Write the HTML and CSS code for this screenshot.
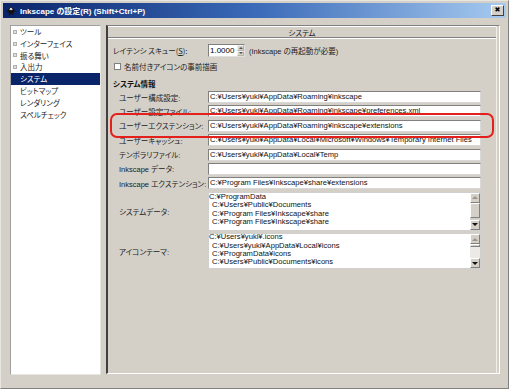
FILE: index.html
```html
<!DOCTYPE html>
<html lang="ja">
<head>
<meta charset="utf-8">
<link rel="stylesheet" href="styles.css">
</head>
<body>
<div class="window">
  <div class="titlebar">
    <svg class="app-icon" width="10" height="10" viewBox="0 0 10 10">
      <path d="M5 0.5 L9.2 5 Q9.5 5.6 8.8 5.8 L7.2 6 L7.6 8.6 Q7.4 9.4 6.6 8.8 L5.2 7.2 L3.6 9.4 Q2.9 9.8 2.8 9 L3 6.4 L1.3 6.2 Q0.5 6 0.9 5.2 Z" fill="#111"/>
      <path d="M5 1.6 L7 3.8 L5.8 3.4 L5 4.4 L4.2 3.4 L3 3.8 Z" fill="#fff"/>
    </svg>
    <span class="title-text">Inkscape の設定(R) (Shift+Ctrl+P)</span>
    <span class="close-btn">&#x2716;</span>
  </div>
  <div class="main">
    <div class="tree">
      <div class="node"><span class="exp"></span>ツール</div>
      <div class="node"><span class="exp"></span>インターフェイス</div>
      <div class="node"><span class="exp"></span>振る舞い</div>
      <div class="node"><span class="exp"></span>入出力</div>
      <div class="node leaf selected">システム</div>
      <div class="node leaf">ビットマップ</div>
      <div class="node leaf">レンダリング</div>
      <div class="node leaf">スペルチェック</div>
    </div>
    <div class="panel">
      <div class="panel-head">システム</div>
      <div class="panel-body">
        <div class="latency">
          <span class="lat-label">レイテンシ スキュー(<u>S</u>):</span>
          <span class="spin">
            <span class="spin-val">1.0000</span>
            <span class="spin-btns"><span class="arr up"></span><span class="arr down"></span></span>
          </span>
          <span class="lat-note">(Inkscape の再起動が必要)</span>
        </div>
        <div class="check-row"><span class="checkbox"></span>名前付きアイコンの事前描画</div>
        <div class="section">システム情報</div>
        <div class="grid">
          <span class="lbl">ユーザー構成設定:</span><span class="entry">C:¥Users¥yuki¥AppData¥Roaming¥inkscape</span>
          <span class="lbl">ユーザー設定ファイル:</span><span class="entry">C:¥Users¥yuki¥AppData¥Roaming¥inkscape¥preferences.xml</span>
          <span class="lbl">ユーザーエクステンション:</span><span class="entry">C:¥Users¥yuki¥AppData¥Roaming¥inkscape¥extensions</span>
          <span class="lbl">ユーザーキャッシュ:</span><span class="entry">C:¥Users¥yuki¥AppData¥Local¥Microsoft¥Windows¥Temporary Internet Files</span>
          <span class="lbl">テンポラリファイル:</span><span class="entry">C:¥Users¥yuki¥AppData¥Local¥Temp</span>
          <span class="lbl">Inkscape データ:</span><span class="entry"></span>
          <span class="lbl">Inkscape エクステンション:</span><span class="entry">C:¥Program Files¥Inkscape¥share¥extensions</span>
          <span class="lbl">システムデータ:</span>
          <div class="list list-sys">
            <div class="list-text">
              <div>C:¥ProgramData</div>
              <div class="ind">C:¥Users¥Public¥Documents</div>
              <div class="ind">C:¥Program Files¥Inkscape¥share</div>
              <div class="ind">C:¥Program Files¥Inkscape¥share</div>
            </div>
            <div class="sbar">
              <span class="sbtn"><span class="tri up dis"></span></span>
              <span class="thumb t1"></span>
              <span class="track"></span>
              <span class="sbtn"><span class="tri down"></span></span>
            </div>
          </div>
          <span class="lbl">アイコンテーマ:</span>
          <div class="list list-icon">
            <div class="list-text">
              <div>C:¥Users¥yuki¥.icons</div>
              <div class="ind">C:¥Users¥yuki¥AppData¥Local¥icons</div>
              <div class="ind">C:¥ProgramData¥icons</div>
              <div class="ind">C:¥Users¥Public¥Documents¥icons</div>
              <div class="ind">C:¥Program Files¥Inkscape¥share¥icons</div>
            </div>
            <div class="sbar">
              <span class="sbtn"><span class="tri up dis"></span></span>
              <span class="thumb t2"></span>
              <span class="track light"></span>
              <span class="sbtn"><span class="tri down"></span></span>
            </div>
          </div>
        </div>
      </div>
    </div>
  </div>
  <div class="highlight"></div>
</div>
</body>
</html>
```

FILE: styles.css
```css
* { box-sizing: border-box; }
html, body { margin: 0; padding: 0; }
body {
  background: #ffffff;
  font-family: "Noto Sans CJK JP", sans-serif;
  font-feature-settings: "palt" 1;
  color: #000;
}
.window {
  position: relative;
  width: 509px;
  height: 389px;
  background: #d4d0c8;
  border-top: 1px solid #e8e6e0;
  border-left: 1px solid #e8e6e0;
  border-right: 1px solid #808080;
  border-bottom: 1px solid #808080;
  padding: 2px 2px 0 2px;
  display: flex;
  flex-direction: column;
}
.titlebar {
  height: 15px;
  background: linear-gradient(to right, #0a246a 0%, #3a6ab8 50%, #a6caf0 100%);
  display: flex;
  align-items: center;
  padding: 0 2px 0 2px;
}
.app-icon { margin-right: 4px; margin-left: 1px; }
.title-text {
  color: #fff;
  font-family: "Liberation Sans", "Noto Sans CJK JP", sans-serif;
  font-weight: bold;
  font-size: 8px;
  flex: 1;
}
.close-btn {
  width: 13px;
  height: 11px;
  background: #d4d0c8;
  border-top: 1px solid #fff;
  border-left: 1px solid #fff;
  border-right: 1px solid #404040;
  border-bottom: 1px solid #404040;
  font-size: 7px;
  line-height: 9px;
  text-align: center;
  color: #000;
  font-family: "DejaVu Sans", sans-serif;
  font-weight: bold;
}
.main {
  display: flex;
  padding: 7px 0 0 7px;
  gap: 5px;
}
.tree {
  width: 91px;
  height: 350px;
  background: #fff;
  border-top: 1px solid #a0a0a0;
  border-left: 1px solid #a0a0a0;
  border-right: 1px solid #e8e6e0;
  border-bottom: 1px solid #e8e6e0;
  font-size: 7.5px;
}
.node {
  height: 11.8px;
  line-height: 11.8px;
  display: flex;
  align-items: center;
  padding-left: 2px;
  color: #222;
  white-space: nowrap;
}
.node.leaf { padding-left: 9px; }
.node.selected { background: #0a246a; color: #fff; }
.exp {
  width: 4px;
  height: 4px;
  border: 1px solid #b0b0b0;
  background: #e0e0e0;
  margin-right: 3px;
}
.panel {
  width: 394px;
  height: 349px;
  border-top: 1px solid #808080;
  border-left: 2px solid #404040;
  border-right: 1px solid #fff;
  border-bottom: 1px solid #fff;
  box-shadow: inset -2px 0 0 #d4d0c8, inset -3px 0 0 #f0eee8;
  font-size: 7.5px;
}
.panel-head {
  height: 12px;
  line-height: 11px;
  text-align: center;
  border-top: 1px solid #fff;
  border-bottom: 1px solid #808080;
  box-shadow: 0 1px 0 #fff;
  margin-right: 3px;
  color: #222;
}
.panel-body { padding: 6px 0 0 5px; }
.latency {
  display: flex;
  align-items: center;
  height: 13px;
}
.lat-label { width: 95px; color: #222; }
.lat-label u { text-decoration: underline; }
.spin {
  display: flex;
  height: 13px;
  width: 37px;
  background: #fff;
  border-top: 1px solid #808080;
  border-left: 1px solid #808080;
  border-right: 1px solid #e0e0e0;
  border-bottom: 1px solid #e0e0e0;
}
.spin-val {
  flex: 1;
  font-family: "Liberation Sans", sans-serif;
  font-size: 8px;
  line-height: 11px;
  padding-left: 1px;
}
.spin-btns {
  width: 7px;
  display: flex;
  flex-direction: column;
  background: #d4d0c8;
}
.arr {
  flex: 1;
  display: flex;
  align-items: center;
  justify-content: center;
  border: 1px solid #b8b4ac;
  border-top-color: #f4f4f4;
  border-left-color: #f4f4f4;
}
.arr::after {
  content: "";
  border-left: 2px solid transparent;
  border-right: 2px solid transparent;
}
.arr.up::after { border-bottom: 2px solid #555; }
.arr.down::after { border-top: 2px solid #555; }
.lat-note {
  margin-left: 4px;
  font-family: "Liberation Sans", "Noto Sans CJK JP", sans-serif;
  font-size: 7.5px;
  color: #222;
}
.check-row {
  display: flex;
  align-items: center;
  height: 10px;
  margin-top: 4px;
  padding-left: 1px;
  color: #222;
}
.checkbox {
  width: 7px;
  height: 7px;
  background: #fff;
  border: 1px solid #808080;
  margin-right: 3px;
}
.section {
  margin-top: 8px;
  height: 10px;
  line-height: 10px;
  font-weight: bold;
  color: #111;
}
.grid {
  margin-top: 2px;
  padding-left: 6px;
  display: grid;
  grid-template-columns: 89px 273px;
  row-gap: 2.4px;
  align-items: center;
}
.lbl {
  font-family: "Liberation Sans", "Noto Sans CJK JP", sans-serif;
  font-size: 7.5px;
  color: #222;
  white-space: nowrap;
}
.entry {
  height: 12px;
  background: #fff;
  border-top: 1px solid #808080;
  border-left: 1px solid #808080;
  border-right: 1px solid #d8d8d8;
  border-bottom: 1px solid #d8d8d8;
  font-family: "Liberation Sans", sans-serif;
  font-size: 7.6px;
  line-height: 10px;
  padding-left: 1px;
  white-space: nowrap;
  overflow: hidden;
  color: #111;
}
.list {
  display: flex;
  background: #fff;
  border: 1px solid #d0d0d0;
  overflow: hidden;
}
.list-sys { height: 39px; }
.list-icon { height: 36px; }
.list-text {
  flex: 1;
  font-family: "Liberation Sans", sans-serif;
  font-size: 7.6px;
  line-height: 8.4px;
  white-space: nowrap;
  overflow: hidden;
  color: #111;
}
.list-icon .list-text { margin-top: -1px; }
.list-text .ind { padding-left: 3px; }
.sbar {
  width: 10px;
  display: flex;
  flex-direction: column;
  background: #d4d0c8;
}
.sbtn, .thumb {
  display: flex;
  align-items: center;
  justify-content: center;
  background: #d4d0c8;
  border-top: 1px solid #fff;
  border-left: 1px solid #fff;
  border-right: 1px solid #808080;
  border-bottom: 1px solid #808080;
}
.sbtn { height: 10px; }
.thumb.t1 { height: 15px; }
.thumb.t2 { height: 3px; }
.track { flex: 1; background: #d4d0c8; }
.track.light { background: #eceae6; }
.tri {
  width: 0;
  height: 0;
  border-left: 3px solid transparent;
  border-right: 3px solid transparent;
}
.tri.up { border-bottom: 3px solid #111; }
.tri.down { border-top: 3px solid #111; }
.tri.up.dis { border-bottom-color: #9a968e; }
.highlight {
  position: absolute;
  left: 109px;
  top: 112px;
  width: 384px;
  height: 25px;
  border: 2px solid #e3201c;
  border-radius: 7px;
  pointer-events: none;
}
```
